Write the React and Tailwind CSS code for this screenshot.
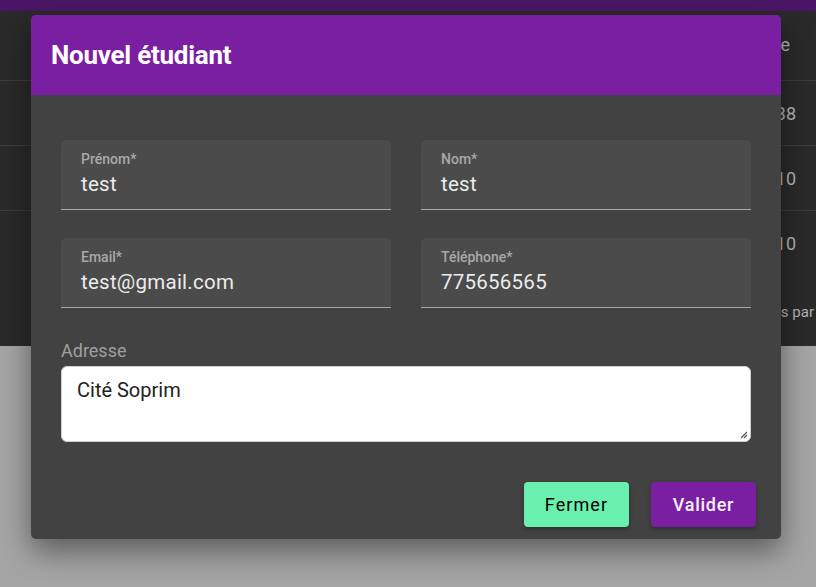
export default function App() {
  const font = { fontFamily: "Roboto, 'Noto Sans', sans-serif" };
  const Field = ({ label, value }) => (
    <div className="h-[70px] rounded-t-[5px] bg-[#4b4b4b] border-b border-[#a8a8a8] px-5 pt-[11px]">
      <div className="text-[14px] leading-[16px] font-medium text-[#a9a9a9]">{label}</div>
      <div className="mt-[5px] text-[20.5px] leading-[24px] text-[#ececec] tracking-[0.012em]">{value}</div>
    </div>
  );
  return (
    <div className="relative w-[816px] h-[587px] overflow-hidden bg-[#a5a5a5]" style={font}>
      {/* background page */}
      <div className="h-[11px] bg-[#4a1566]" />
      <div className="bg-[#2a2a2a] h-[335px] flex flex-col text-[#b4b4b4] text-[18px]">
        <div className="h-[70px] border-b border-[#3c3c3c] flex items-center justify-end pr-[26px]">
          <span className="-mt-[2px]">e</span>
        </div>
        <div className="h-[65px] border-b border-[#3c3c3c] flex items-center justify-end pr-[20px]">
          <span>38</span>
        </div>
        <div className="h-[65px] border-b border-[#3c3c3c] flex items-center justify-end pr-[20px]">
          <span>10</span>
        </div>
        <div className="h-[65px] flex items-center justify-end pr-[20px]">
          <span>10</span>
        </div>
        <div className="flex-1 flex items-start justify-end pr-[2px] pt-[25px] text-[15px]">
          <span>s par</span>
        </div>
      </div>

      {/* modal */}
      <div className="absolute left-[31px] top-[15px] w-[750px] h-[524px] rounded-[5px] bg-[#424242] shadow-[0_12px_30px_rgba(0,0,0,0.45)] overflow-hidden flex flex-col">
        <div className="h-[80px] bg-[#7b1fa2] flex items-center px-5">
          <h2 className="text-[26px] font-bold text-white tracking-[-0.01em]">Nouvel étudiant</h2>
        </div>
        <div className="px-[30px] pt-[45px]">
          <div className="grid grid-cols-2 gap-x-[30px] gap-y-[28px]">
            <Field label="Prénom*" value="test" />
            <Field label="Nom*" value="test" />
            <Field label="Email*" value="test@gmail.com" />
            <Field label="Téléphone*" value="775656565" />
          </div>
          <div className="mt-[31px] text-[18px] leading-[24px] text-[#a0a0a0]">Adresse</div>
          <div className="relative mt-[3px] h-[76px] rounded-[6px] bg-white border border-[#cfcfcf] px-[15px] pt-[11px] text-[20px] leading-[24px] text-[#222]">
            Cité Soprim
            <svg className="absolute right-[2px] bottom-[2px]" width="10" height="10" viewBox="0 0 10 10">
              <path d="M9 3 L3 9 M9 6 L6 9" stroke="#555" strokeWidth="1.2" />
            </svg>
          </div>
          <div className="flex justify-end gap-[22px] mt-[40px] mr-[-5px]">
            <button className="w-[105px] h-[45px] rounded-[4px] bg-[#69f0ae] text-black text-[18px] tracking-[0.06em] shadow-[0_2px_4px_rgba(0,0,0,0.3)]">Fermer</button>
            <button className="w-[105px] h-[45px] rounded-[4px] bg-[#7b1fa2] text-[#f3f3f3] text-[18px] font-medium tracking-[0.04em] shadow-[0_2px_4px_rgba(0,0,0,0.3)]">Valider</button>
          </div>
        </div>
      </div>
    </div>
  );
}
